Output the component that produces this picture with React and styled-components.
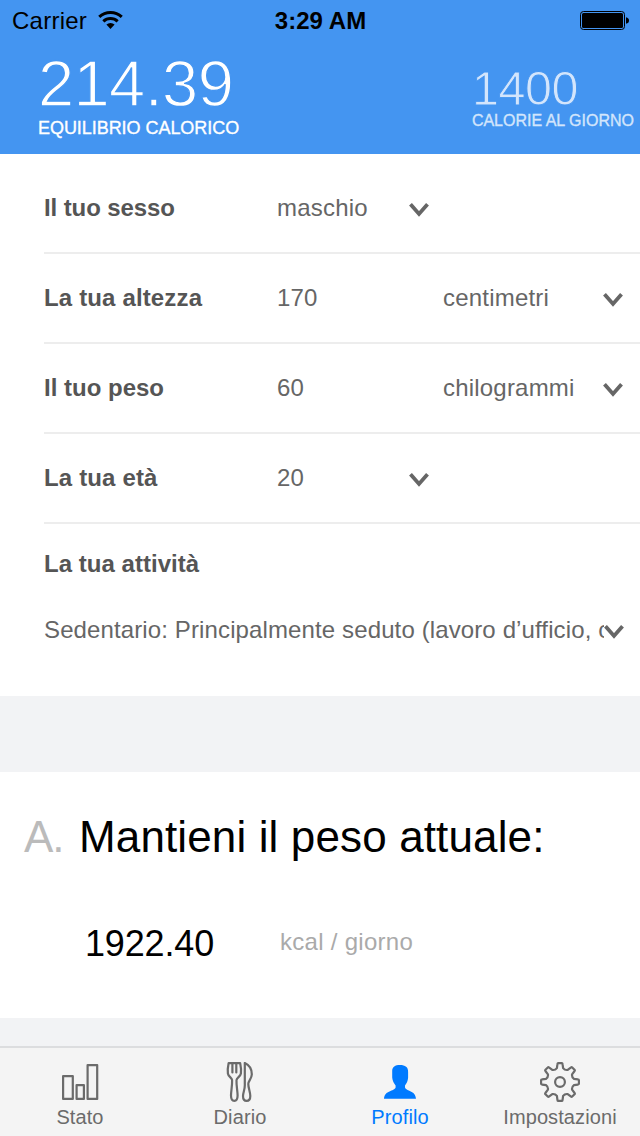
import React from "react";
import styled, { createGlobalStyle } from "styled-components";

const GlobalStyle = createGlobalStyle`
  * { box-sizing: border-box; }
  body {
    margin: 0;
    background: #f2f3f5;
    font-family: "Liberation Sans", Arial, sans-serif;
  }
  svg { display: block; flex: none; }
`;

const Screen = styled.div`
  width: 640px;
  height: 1136px;
  display: flex;
  flex-direction: column;
  overflow: hidden;
  background: #f2f3f5;
`;

const Header = styled.header`
  height: 154px;
  flex: none;
  background: #4495f1;
`;

const StatusBar = styled.div`
  height: 40px;
  padding: 1px 11px 0 12px;
  display: grid;
  grid-template-columns: 1fr auto 1fr;
  align-items: center;
  font-size: 24px;
  line-height: 27px;
  color: #000;
`;

const Carrier = styled.div`
  display: flex;
  align-items: center;
  gap: 11px;
  letter-spacing: 0.25px;
`;

const Clock = styled.div`
  font-weight: 700;
  letter-spacing: 0.05px;
`;

const BatterySlot = styled.div`
  display: flex;
  justify-content: flex-end;
`;

const Summary = styled.div`
  display: flex;
  justify-content: space-between;
  align-items: flex-start;
  padding: 0 6px 0 38px;
`;

const Stat = styled.div`
  margin-top: ${(p) => (p.$large ? 9 : 23)}px;
  color: ${(p) => (p.$large ? "#ffffff" : "#d3e5fc")};
  white-space: nowrap;
`;

const StatValue = styled.div`
  font-size: ${(p) => (p.$large ? 65 : 48.5)}px;
  line-height: ${(p) => (p.$large ? 70 : 50)}px;
  letter-spacing: ${(p) => (p.$large ? -0.6 : -0.4)}px;
  -webkit-text-stroke: ${(p) => (p.$large ? 1.3 : 0.9)}px #4495f1;
`;

const StatLabel = styled.div`
  font-size: ${(p) => (p.$large ? 18 : 16)}px;
  line-height: ${(p) => (p.$large ? 18 : 15)}px;
  letter-spacing: ${(p) => (p.$large ? -0.05 : 0)}px;
  -webkit-text-stroke: 0.35px currentColor;
`;

const Form = styled.section`
  height: 542px;
  flex: none;
  padding: 10px 0 0 44px;
  background: #fff;
  color: #666;
  font-size: 24px;
`;

const Row = styled.div`
  height: 90px;
  display: grid;
  grid-template-columns: 233px 132px 34px 160px 1fr;
  align-items: center;
  border-bottom: 2px solid #ededed;
`;

const Label = styled.div`
  font-weight: 700;
  line-height: 27px;
  padding-bottom: ${(p) => (p.$inRow ? 2 : 0)}px;
  letter-spacing: ${(p) => p.$track ?? 0}px;
  color: #555;
  white-space: nowrap;
`;

const Value = styled.div`
  padding-bottom: 2px;
  line-height: 27px;
  letter-spacing: 0.2px;
  white-space: nowrap;
`;

const Activity = styled.div`
  display: flex;
  flex-direction: column;
  gap: 39px;
  padding-top: 26px;
`;

const ActivitySelect = styled.div`
  display: flex;
  align-items: center;
`;

const ActivityText = styled.div`
  width: 560px;
  overflow: hidden;
  white-space: nowrap;
  line-height: 27px;
  letter-spacing: 0.12px;
`;

const Card = styled.section`
  height: 246px;
  flex: none;
  margin-top: 76px;
  padding: 40px 24px 0;
  background: #fff;
`;

const CardTitle = styled.h2`
  margin: 0;
  display: flex;
  font-size: 44px;
  line-height: 50px;
  font-weight: 400;
  letter-spacing: 0.13px;
  white-space: nowrap;
`;

const Letter = styled.span`
  width: 55px;
  letter-spacing: -1px;
  color: #bbb;
`;

const CardResult = styled.div`
  display: flex;
  margin-top: 61px;
  padding-left: 61px;
`;

const Amount = styled.div`
  width: 195px;
  font-size: 36px;
  line-height: 41px;
  letter-spacing: -0.15px;
`;

const Unit = styled.div`
  padding-top: 5px;
  font-size: 24px;
  line-height: 27px;
  letter-spacing: 0.28px;
  color: #aaa;
`;

const TabBar = styled.nav`
  height: 90px;
  flex: none;
  margin-top: auto;
  display: grid;
  grid-template-columns: repeat(4, 1fr);
  border-top: 2px solid #dcdddf;
  background: #f4f4f4;
`;

const Tab = styled.div`
  padding-top: 14px;
  display: flex;
  flex-direction: column;
  align-items: center;
  gap: 3px;
  font-size: 20px;
  line-height: 24px;
  letter-spacing: 0.1px;
  color: ${(p) => (p.$active ? "#007aff" : "#6b6b6b")};
`;

const Wifi = () => (
  <svg width="25" height="18" viewBox="0 0 25 18" fill="none" stroke="#000" strokeWidth="3" transform="translate(0 -1)">
    <path d="M1.25 5.94A16.5 16.5 0 0 1 23.75 5.94" />
    <path d="M5.34 10.32A10.5 10.5 0 0 1 19.66 10.32" />
    <path d="M12.5 18L8.4 13.6A6 6 0 0 1 16.6 13.6Z" fill="#000" stroke="none" />
  </svg>
);

const Battery = () => (
  <svg width="49" height="19" viewBox="0 0 49 19">
    <rect x="0.5" y="0.5" width="44" height="18" rx="3" fill="none" stroke="#000" />
    <rect x="2" y="2" width="41" height="15" rx="1.5" />
    <path d="M46 6.2C48 6.6 49 7.8 49 9.5S48 12.4 46 12.8Z" />
  </svg>
);

const Chevron = () => (
  <svg width="20" height="14" viewBox="0 0 20 14" fill="none" stroke="#666" strokeWidth="3.8" transform="translate(0 2)">
    <path d="M1.5 1.3L10 10.9L18.5 1.3" />
  </svg>
);

const TabIcon = ({ children }) => (
  <svg width="40" height="40" viewBox="0 0 40 40" fill="none" stroke="currentColor" strokeWidth="2.2" strokeLinejoin="round" strokeLinecap="round">
    {children}
  </svg>
);

const BarsIcon = () => (
  <TabIcon>
    <rect x="3.1" y="14.1" width="9.7" height="22.8" />
    <rect x="16.6" y="23.1" width="7.3" height="13.8" />
    <rect x="27.6" y="3.1" width="9.6" height="33.8" />
  </TabIcon>
);

const CutleryIcon = () => (
  <TabIcon>
    <path d="M8.6 1.2H20.2C21 5 21.4 8.5 20.9 11.5C20.3 14.8 16.8 15.4 16.5 18.2C16.3 24 17.6 29 17.6 33.5C17.6 37.2 16.2 38.8 14.3 38.8S11 37.2 11 33.5C11 29 12.3 24 12.1 18.2C11.8 15.4 8.4 14.8 7.9 11.5C7.4 8.5 7.8 5 8.6 1.2Z" />
    <path d="M12.4 1.2V10.5M16.3 1.2V10.5" />
    <path d="M24.8 1C29 3 31.9 7.5 31.8 12.5C31.6 17 28.4 18.5 28.3 22C28.3 26 30.3 30 30.3 34C30.3 37.5 28.8 38.9 26.6 38.9S23 37.5 23 34C23 30.5 25.2 27 24.8 22Z" />
  </TabIcon>
);

const PersonIcon = () => (
  <TabIcon>
    <path
      fill="currentColor"
      stroke="none"
      d="M20 3C25.2 3 28.3 5 28.1 10V15.5C28 18.5 26.6 21.6 25 23.4V25.4C26.4 29.6 35.4 27.8 36 36.8H4C4.6 27.8 14.2 29.6 15.6 25.4V23.4C14 21.6 12.4 18.5 12.2 15.5V8.5C12.4 5 15 3 20 3Z"
    />
  </TabIcon>
);

const point = (radius, degrees) => {
  const a = (degrees * Math.PI) / 180;
  return `${(20 + radius * Math.sin(a)).toFixed(2)} ${(20 - radius * Math.cos(a)).toFixed(2)}`;
};

const gearPath =
  Array.from({ length: 8 }, (_, i) => {
    const a = i * 45;
    return `${i ? "L" : "M"}${point(14.3, a - 12.5)}L${point(18, a - 8.2)}Q${point(19.1, a - 7.5)} ${point(19, a - 5)}L${point(19, a + 5)}Q${point(19.1, a + 7.5)} ${point(18, a + 8.2)}L${point(14.3, a + 12.5)}Q${point(12.6, a + 22.5)} ${point(14.3, a + 32.5)}`;
  }).join("") + "Z";

const GearIcon = () => (
  <TabIcon>
    <path d={gearPath} />
    <circle cx="20" cy="20" r="4.9" />
  </TabIcon>
);

const tabs = [
  { name: "Stato", Icon: BarsIcon },
  { name: "Diario", Icon: CutleryIcon },
  { name: "Profilo", Icon: PersonIcon, active: true },
  { name: "Impostazioni", Icon: GearIcon },
];

const rows = [
  { label: "Il tuo sesso", value: "maschio", pick: true, track: -0.1 },
  { label: "La tua altezza", value: "170", unit: "centimetri", track: 0.15 },
  { label: "Il tuo peso", value: "60", unit: "chilogrammi", track: 0 },
  { label: "La tua età", value: "20", pick: true, track: 0.15 },
];

export default function App() {
  return (
    <Screen>
      <GlobalStyle />
      <Header>
        <StatusBar>
          <Carrier>
            Carrier
            <Wifi />
          </Carrier>
          <Clock>3:29 AM</Clock>
          <BatterySlot>
            <Battery />
          </BatterySlot>
        </StatusBar>
        <Summary>
          <Stat $large>
            <StatValue $large>214.39</StatValue>
            <StatLabel $large>EQUILIBRIO CALORICO</StatLabel>
          </Stat>
          <Stat>
            <StatValue>1400</StatValue>
            <StatLabel>CALORIE AL GIORNO</StatLabel>
          </Stat>
        </Summary>
      </Header>

      <Form>
        {rows.map((row) => (
          <Row key={row.label}>
            <Label $inRow $track={row.track}>{row.label}</Label>
            <Value>{row.value}</Value>
            {row.pick ? <Chevron /> : <span />}
            {row.unit && <Value>{row.unit}</Value>}
            {row.unit && <Chevron />}
          </Row>
        ))}
        <Activity>
          <Label $track={0.03}>La tua attività</Label>
          <ActivitySelect>
            <ActivityText>Sedentario: Principalmente seduto (lavoro d’ufficio, c</ActivityText>
            <Chevron />
          </ActivitySelect>
        </Activity>
      </Form>

      <Card>
        <CardTitle>
          <Letter>A.</Letter>
          Mantieni il peso attuale:
        </CardTitle>
        <CardResult>
          <Amount>1922.40</Amount>
          <Unit>kcal / giorno</Unit>
        </CardResult>
      </Card>

      <TabBar>
        {tabs.map(({ name, Icon, active }) => (
          <Tab key={name} $active={active}>
            <Icon />
            {name}
          </Tab>
        ))}
      </TabBar>
    </Screen>
  );
}
